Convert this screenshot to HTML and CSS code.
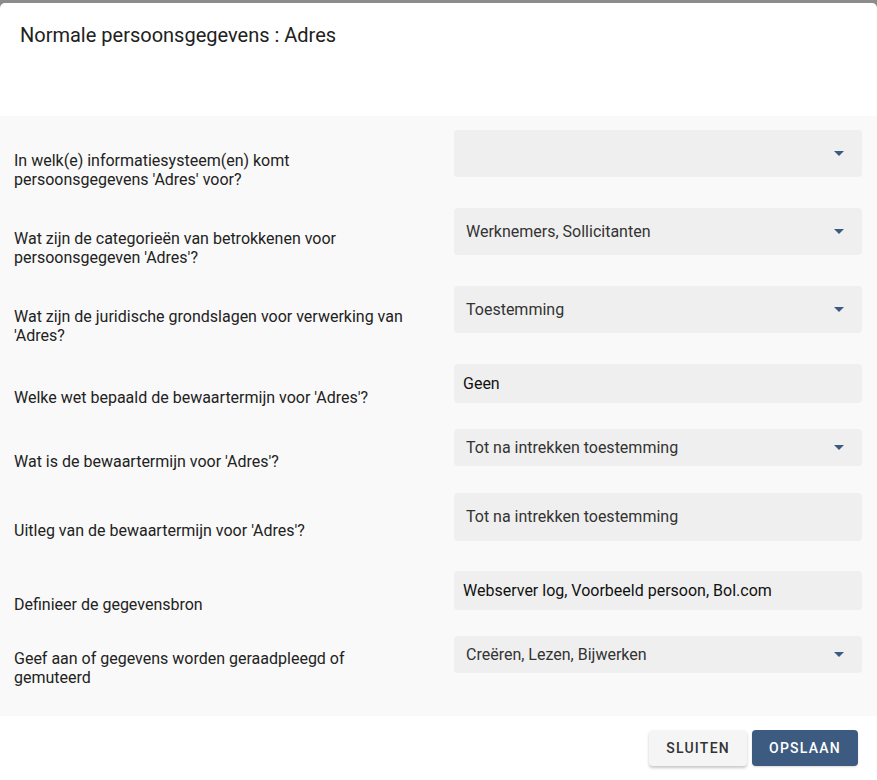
FILE: index.html
```html
<!DOCTYPE html>
<html lang="nl">
<head>
<meta charset="utf-8">
<title>Normale persoonsgegevens : Adres</title>
<link rel="stylesheet" href="styles.css">
</head>
<body>
<div class="dialog">
  <header class="dialog-header">
    <h1 class="dialog-title">Normale persoonsgegevens : Adres</h1>
  </header>
  <main class="dialog-body">
    <div class="row row-tall">
      <label class="label">In welk(e) informatiesysteem(en) komt<br>persoonsgegevens 'Adres' voor?</label>
      <div class="field select"><span class="value"></span><span class="arrow"></span></div>
    </div>
    <div class="row row-tall">
      <label class="label">Wat zijn de categorieën van betrokkenen voor<br>persoonsgegeven 'Adres'?</label>
      <div class="field select"><span class="value">Werknemers, Sollicitanten</span><span class="arrow"></span></div>
    </div>
    <div class="row row-tall">
      <label class="label">Wat zijn de juridische grondslagen voor verwerking van<br>'Adres?</label>
      <div class="field select"><span class="value">Toestemming</span><span class="arrow"></span></div>
    </div>
    <div class="row row-text">
      <label class="label">Welke wet bepaald de bewaartermijn voor 'Adres'?</label>
      <div class="field text"><span class="value">Geen</span></div>
    </div>
    <div class="row row-short">
      <label class="label">Wat is de bewaartermijn voor 'Adres'?</label>
      <div class="field select"><span class="value">Tot na intrekken toestemming</span><span class="arrow"></span></div>
    </div>
    <div class="row row-area">
      <label class="label">Uitleg van de bewaartermijn voor 'Adres'?</label>
      <div class="field select"><span class="value">Tot na intrekken toestemming</span></div>
    </div>
    <div class="row row-text">
      <label class="label">Definieer de gegevensbron</label>
      <div class="field text"><span class="value">Webserver log, Voorbeeld persoon, Bol.com</span></div>
    </div>
    <div class="row row-short row-last">
      <label class="label">Geef aan of gegevens worden geraadpleegd of<br>gemuteerd</label>
      <div class="field select"><span class="value">Creëren, Lezen, Bijwerken</span><span class="arrow"></span></div>
    </div>
  </main>
  <footer class="dialog-footer">
    <button class="btn btn-secondary" type="button">Sluiten</button>
    <button class="btn btn-primary" type="button">Opslaan</button>
  </footer>
</div>
</body>
</html>
```

FILE: styles.css
```css
* { box-sizing: border-box; }

html, body {
  margin: 0;
  padding: 0;
}

body {
  background: #8c8c8c;
  font-family: Roboto, "Liberation Sans", Arial, sans-serif;
  height: 780px;
  overflow: hidden;
}

.dialog {
  margin-top: 3px;
  background: #ffffff;
  border-radius: 5px 5px 0 0;
  height: 777px;
  display: flex;
  flex-direction: column;
}

.dialog-header {
  height: 113px;
  padding: 20px 20px 0;
}

.dialog-title {
  margin: 0;
  font-size: 20px;
  line-height: 24px;
  font-weight: 400;
  color: #212121;
}

.dialog-body {
  background: #f9f9f9;
  padding: 14px 15px 0 0;
}

.row {
  display: grid;
  grid-template-columns: 454px 408px;
  align-items: center;
}

.row-tall { grid-template-rows: 47px; margin-bottom: 31px; }
.row-text { grid-template-rows: 39px; margin-bottom: 26px; }
.row-short { grid-template-rows: 37px; margin-bottom: 27px; }
.row-area { grid-template-rows: 48px; margin-bottom: 30px; }
.row-last { margin-bottom: 43px; }

.label {
  padding-left: 14px;
  font-size: 16px;
  line-height: 19px;
  color: #222222;
  margin: 13.5px 0 -13.5px;
}

.row-tall .label {
  margin: 16px 0 -16px;
}

.field {
  height: 100%;
  background: #efefef;
  border-radius: 4px;
  display: flex;
  align-items: center;
  font-size: 16px;
  line-height: 20px;
}

.field.select {
  padding: 0 18px 0 12px;
  color: #333333;
}

.field.text {
  padding: 0 12px 0 9px;
  color: #111111;
}

.value {
  flex: 1;
  white-space: nowrap;
}

.arrow {
  width: 0;
  height: 0;
  border-left: 5px solid transparent;
  border-right: 5px solid transparent;
  border-top: 5px solid #3d5a80;
}

.dialog-footer {
  flex: 1;
  display: flex;
  justify-content: flex-end;
  align-items: flex-start;
  gap: 5px;
  padding: 14px 19px 0 0;
  background: #ffffff;
}

.btn {
  height: 36px;
  padding: 0 17px;
  border: none;
  border-radius: 4px;
  font-family: Roboto, "Liberation Sans", Arial, sans-serif;
  font-size: 14px;
  font-weight: 500;
  letter-spacing: 1.25px;
  text-transform: uppercase;
  cursor: pointer;
}

.btn-secondary {
  background: #f5f5f5;
  color: #333333;
  box-shadow: 0 2px 3px rgba(0, 0, 0, 0.22);
  min-width: 96px;
}

.btn-primary {
  background: #3d5a80;
  color: #ffffff;
  box-shadow: 0 1px 2px rgba(0, 0, 0, 0.15);
  min-width: 105px;
}
```
